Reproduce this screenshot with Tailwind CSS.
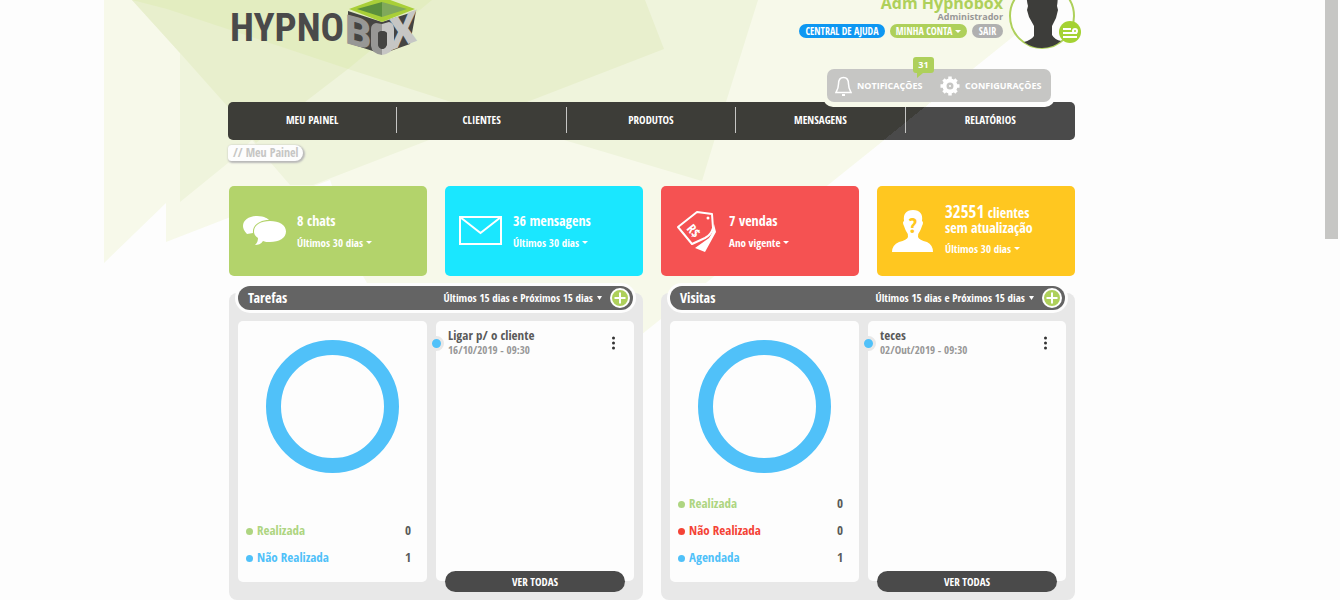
<!DOCTYPE html>
<html lang="pt-BR">
<head>
<meta charset="utf-8">
<title>Hypnobox - Meu Painel</title>
<script src="https://cdn.jsdelivr.net/npm/@tailwindcss/browser@4"></script>
</head>
<body class="relative h-screen overflow-hidden bg-[#fdfdfd] pr-[37px] font-['Open_Sans_Condensed','Open_Sans',sans-serif] text-[11px] font-bold leading-4 text-[#4a4a4a]">
<div class="absolute right-[2px] top-0 h-[239px] w-[13px] bg-[#c6c6c4]"></div>

<div class="relative mx-auto w-full max-w-[847px]">
  <!-- faceted background -->
  <svg class="pointer-events-none absolute -left-[228px] top-0" width="1100" height="600" viewBox="0 0 1100 600" aria-hidden="true">
    <path fill="#f7f9ea" d="M104 0H1059L500 448L367 283L363 276L330 180L228 218L166 242V203L104 263Z"/>
    <path fill="#eff4dc" d="M132 0H758L726 102L702 181L564 140L497 113L429 140L313 185H290L271 163L252 140L228 163L180 202V53Z"/>
    <path fill="#e8efcd" d="M132 0H645L664 49L527 102L500 113L470 108L348 69L305 102L256 143L228 107L180 53Z"/>
    <path fill="#e3edc0" d="M132 0H432L348 69L167 9Z"/>
  </svg>

  <div class="relative">
    <header class="flex h-[102px] justify-between">
      <a href="#" aria-label="Hypnobox" class="block">
        <svg width="200" height="60" viewBox="228 0 200 60">
          <text x="230" y="41" font-family="Roboto Condensed" font-weight="700" font-size="39" fill="#4a4a4a">HYPNO</text>
          <path fill="#444442" d="M348 11L382 22L416 11L410 44L382 54L348 43Z"/>
          <g font-family="Roboto" font-weight="900">
            <text transform="translate(345 43) skewY(15)" font-size="41" fill="#979795">B</text>
            <text transform="translate(389 51) skewY(-20)" font-size="44" fill="#c6c6c4">X</text>
          </g>
          <path fill="#979795" d="M382 24L376 23Q371 24 371 29V46Q372 54 382 55V49Q378 48 378 43V34Q378 31 382 31Z"/>
          <path fill="#c6c6c4" d="M382 24L389 22Q394 23 394 29V45Q393 53 382 55V49Q387 48 387 43V34Q387 31 382 31Z"/>
          <path fill="#444442" d="M378 33Q382 29 387 33V44Q386 49 382 49Q378 48 378 44Z"/>
          <path fill="#a9cf38" d="M382 -3L415 9L382 22L349 9Z"/>
          <path fill="#5b8f3c" d="M382 2V17L357 9Z"/>
          <path fill="#80a95b" d="M382 2V17L407 9Z"/>
        </svg>
      </a>
      <div class="-mr-2 flex w-[284px] flex-col justify-between">
        <div class="flex gap-[6px]">
          <div class="-mt-[5px] flex w-[204px] flex-col items-end">
            <p class="font-['Open_Sans'] text-[16px] leading-4 text-[#aed05b]">Adm Hypnobox</p>
            <p class="font-['Open_Sans'] text-[9px] leading-3 text-[#979797]">Administrador</p>
            <div class="mt-px flex w-full gap-[5px] text-[10px] leading-[14px] text-white">
              <a href="#" class="grow whitespace-nowrap rounded-full bg-[#0e97f2] text-center">CENTRAL DE AJUDA</a>
              <button class="flex w-[77px] items-center justify-center gap-[3px] rounded-full bg-[#aed05b]">MINHA CONTA
                <svg width="6" height="3" viewBox="0 0 6 3"><path fill="#fff" d="M0 0H6L3 3Z"/></svg></button>
              <a href="#" class="w-[31px] rounded-full bg-[#b0b0b0] text-center">SAIR</a>
            </div>
          </div>
          <svg class="-mt-[18px] h-[70px] w-[74px] shrink-0" viewBox="1009 -18 74 70" role="img" aria-label="Avatar">
            <circle cx="1042" cy="16" r="32" fill="#fdfdfd" stroke="#aed05b" stroke-width="2"/>
            <path fill="#3d3d3a" d="M1029 -15H1055Q1059 -5 1057 6L1058 10L1056 18L1052 26V35Q1055 40 1061 41Q1053 48 1042 48Q1032 48 1024 42Q1031 40 1034 36V26L1029 17L1027 10L1028 6Q1025 -5 1029 -15Z"/>
            <circle cx="1070" cy="32" r="11" fill="#a4d233"/>
            <path stroke="#fff" stroke-width="2" d="M1063 29H1071M1063 33H1077M1063 37H1077"/>
            <circle cx="1075" cy="31" r="2" fill="none" stroke="#fff" stroke-width="2"/>
          </svg>
        </div>
        <div class="relative ml-6 -mb-[5px] w-[232px] rounded-b-[10px] bg-[linear-gradient(141deg,#f7f9ea_calc(50%+6px),#fdfdfd_calc(50%+6px))] px-1 pb-[5px]">
          <div class="flex h-[33px] items-center rounded-[7px] bg-[#c6c6c4] pl-2 font-['Open_Sans'] text-[9px] font-bold text-white">
            <a href="#" class="flex items-center gap-[5px]">
              <svg width="17" height="20" viewBox="0 0 17 20" fill="none" stroke="#fff" stroke-width="1.5"><path d="M8.500 1.500C4.500 1.500 3.500 5 3.500 8C3.500 12 2.500 14 1 16.500H16C14.500 14 13.500 12 13.500 8C13.500 5 12.500 1.500 8.500 1.500Z"/><path d="M7 19H10" stroke-width="2"/></svg>
              <span class="w-[65px]">NOTIFICAÇÕES</span></a>
            <a href="#" class="ml-[18px] flex items-center gap-[5px]">
              <svg width="20" height="20" viewBox="-10 -10 20 20" fill="none" stroke="#fff"><circle r="5.500" stroke-width="4"/><circle r="1" stroke="none" fill="#fff"/><path stroke-width="3.500" d="M0 -9.500V-6M0 9.500V6M-9.500 0H-6M9.500 0H6M-6.500 -6.500L-4 -4M6.500 6.500L4 4M-6.500 6.500L-4 4M6.500 -6.500L4 -4"/></svg>
              CONFIGURAÇÕES</a>
          </div>
          <span class="absolute -top-3 left-[90px] w-[21px] rounded-[3px] bg-[#aed05b] text-center font-['Open_Sans'] text-[9px] leading-4 text-white">31
            <svg class="absolute left-1 top-4" width="6" height="5" viewBox="0 0 6 5"><path fill="#aed05b" d="M0 0H6L0 5Z"/></svg></span>
        </div>
      </div>
    </header>

    <nav class="-z-10 grid h-[38px] grid-cols-5 items-center divide-x divide-[#c6c6c4] rounded-[5px] bg-[linear-gradient(141deg,#3d3d38_calc(50%+161px),#4a4a4a_calc(50%+161px))] pb-[2px] text-center leading-[26px] text-white">
      <a href="#">MEU PAINEL</a><a href="#">CLIENTES</a><a href="#">PRODUTOS</a><a href="#">MENSAGENS</a><a href="#">RELATÓRIOS</a>
    </nav>

    <div class="mt-[5px] inline-block rounded-l-[4px] rounded-r-[9px] bg-[#fdfdfd] px-[5px] text-[12px] leading-4 text-[#c6c6c4] shadow-[1px_1px_2px_1px_#b8b8b8]">// Meu Painel</div>

    <main class="mt-[25px] pl-px">
      <section class="grid grid-cols-4 gap-[18px] text-white">
        <article class="flex h-[90px] items-center gap-[11px] rounded-[5px] bg-[#b3d36b] pl-[14px]">
          <svg width="43" height="30" viewBox="0 0 43 30" fill="#fff"><path d="M14 0C22 0 25 3 26 4C17 4 9 9 10 17L4 18C1 15 0 12 0 10C0 4 6 0 14 0Z"/><path d="M27 5C36 5 43 9 43 15.500C43 22 36 26 27 26C24 26 22 26 20 25C18 28 15 29 12 29C14 27 15 25 15 22C12 20 11 18 11 15.500C11 9 18 5 27 5Z"/></svg>
          <div class="mt-px"><h2 class="text-[14px] leading-5">8 chats</h2>
          <button class="mt-[2px] flex items-center gap-[3px] leading-5">Últimos 30 dias <svg width="6" height="3" viewBox="0 0 6 3"><path fill="#fff" d="M0 0H6L3 3Z"/></svg></button></div>
        </article>
        <article class="flex h-[90px] items-center gap-[11px] rounded-[5px] bg-[#1ae7ff] pl-[14px]">
          <svg width="43" height="30" viewBox="0 0 43 30" fill="none" stroke="#fff" stroke-width="2"><path d="M1 1H42V28H1ZM1 1L21.500 17L42 1"/></svg>
          <div class="mt-px"><h2 class="text-[14px] leading-5">36 mensagens</h2>
          <button class="mt-[2px] flex items-center gap-[3px] leading-5">Últimos 30 dias <svg width="6" height="3" viewBox="0 0 6 3"><path fill="#fff" d="M0 0H6L3 3Z"/></svg></button></div>
        </article>
        <article class="flex h-[90px] items-center gap-[11px] rounded-[5px] bg-[#f55252] pl-[14px]">
          <svg width="43" height="42" viewBox="0 0 43 42" fill="none"><path stroke="#fff" stroke-width="2" stroke-linejoin="round" d="M3 17L22 2L37 4L38 18Q36 25 30 28L17 34Z"/><circle cx="33" cy="8" r="1.500" fill="#fff"/><path fill="#fff" d="M39 14L41 22L30 42L20 38L34 28Q38 23 39 14Z"/><text x="11" y="19" transform="rotate(50 11 19)" fill="#fff" font-size="13">R$</text></svg>
          <div class="mt-px"><h2 class="text-[14px] leading-5">7 vendas</h2>
          <button class="mt-[2px] flex items-center gap-[3px] leading-5">Ano vigente <svg width="6" height="3" viewBox="0 0 6 3"><path fill="#fff" d="M0 0H6L3 3Z"/></svg></button></div>
        </article>
        <article class="flex h-[90px] items-center gap-[11px] rounded-[5px] bg-[#ffc720] pl-[14px]">
          <svg width="43" height="42" viewBox="0 0 43 42"><path fill="#fff" d="M22 0C29 0 32 4 31 11Q33 12 31 16Q30 19 29 21Q27 23 27 27Q28 30 36 32Q42 35 42 42H1Q1 35 8 32Q16 30 17 27Q17 23 15 21Q14 19 13 16Q11 12 13 11C12 4 15 0 22 0Z"/><text x="22" y="23" text-anchor="middle" fill="#ffc720" font-size="22">?</text></svg>
          <div><h2 class="text-[14px] leading-[15px]"><span class="text-[17px]">32551</span> clientes<br>sem atualização</h2>
          <button class="mt-1 flex items-center gap-[3px] leading-5">Últimos 30 dias <svg width="6" height="3" viewBox="0 0 6 3"><path fill="#fff" d="M0 0H6L3 3Z"/></svg></button></div>
        </article>
      </section>

      <div class="mt-[17px] grid grid-cols-2 gap-[18px]">
        <section class="rounded-[8px] bg-[#e8e8e8] px-[9px] pb-[18px]">
          <header class="-ml-[3px] -mr-[2px] -mt-[10px] rounded-full bg-[#fdfdfd] p-[3px]">
            <div class="flex h-6 items-center rounded-full bg-[#646464] pl-[10px] pr-[3px] text-white">
              <h2 class="grow text-[14px]">Tarefas</h2>
              <button class="flex items-center gap-1">Últimos 15 dias e Próximos 15 dias <svg width="5" height="4" viewBox="0 0 5 4"><path fill="#fff" d="M0 0H5L2.500 4Z"/></svg></button>
              <button class="ml-2" aria-label="Adicionar tarefa"><svg width="20" height="20" viewBox="0 0 20 20"><circle cx="10" cy="10" r="9" fill="#aed05b" stroke="#fff" stroke-width="2"/><path stroke="#fff" stroke-width="2" d="M10 4.500V15.500M4.500 10H15.500"/></svg></button>
            </div>
          </header>
          <div class="mt-2 grid grid-cols-[189fr_198fr] gap-[9px]">
            <div class="flex h-[261px] flex-col rounded-[5px] bg-[#fdfdfd] px-2 pb-[11px] pt-[19px]">
              <svg class="mx-auto" width="134" height="134" viewBox="0 0 134 134" role="img" aria-label="Tarefas"><circle cx="66.500" cy="66.500" r="59" fill="none" stroke="#50c1f9" stroke-width="15"/></svg>
              <ul class="mt-auto text-[13px] leading-[27px]">
                <li class="flex items-center gap-1 text-[#aed581]"><i class="mt-[2px] size-[7px] rounded-full bg-current"></i><span class="grow">Realizada</span><b class="mr-2 text-[#5a5a5a]">0</b></li>
                <li class="flex items-center gap-1 text-[#50c1f9]"><i class="mt-[2px] size-[7px] rounded-full bg-current"></i><span class="grow">Não Realizada</span><b class="mr-2 text-[#5a5a5a]">1</b></li>
              </ul>
            </div>
            <div class="relative mb-px flex flex-col rounded-[5px] bg-[#fdfdfd] pl-3 pr-[9px] pt-[6px]">
              <span class="absolute -left-[7px] top-[15px] size-[15px] rounded-full border-3 border-[#e8e8e8] bg-[#50c1f9]"></span>
              <div class="flex items-center justify-between pr-[9px]">
                <div><h3 class="text-[13px] leading-4 text-[#5a5a5a]">Ligar p/ o cliente</h3><p class="leading-[14px] text-[#979797]">16/10/2019 - 09:30</p></div>
                <button class="mt-[2px]" aria-label="Opções"><svg width="5" height="14" viewBox="0 0 5 14" fill="#333"><circle cx="2.500" cy="2" r="1.500"/><circle cx="2.500" cy="7" r="1.500"/><circle cx="2.500" cy="12" r="1.500"/></svg></button>
              </div>
              <button class="-mb-[11px] -ml-[3px] mt-auto h-[21px] rounded-full bg-[#4a4a4a] text-white">VER TODAS</button>
            </div>
          </div>
        </section>

        <section class="rounded-[8px] bg-[#e8e8e8] px-[9px] pb-[18px]">
          <header class="-ml-[3px] -mr-[2px] -mt-[10px] rounded-full bg-[#fdfdfd] p-[3px]">
            <div class="flex h-6 items-center rounded-full bg-[#646464] pl-[10px] pr-[3px] text-white">
              <h2 class="grow text-[14px]">Visitas</h2>
              <button class="flex items-center gap-1">Últimos 15 dias e Próximos 15 dias <svg width="5" height="4" viewBox="0 0 5 4"><path fill="#fff" d="M0 0H5L2.500 4Z"/></svg></button>
              <button class="ml-2" aria-label="Adicionar visita"><svg width="20" height="20" viewBox="0 0 20 20"><circle cx="10" cy="10" r="9" fill="#aed05b" stroke="#fff" stroke-width="2"/><path stroke="#fff" stroke-width="2" d="M10 4.500V15.500M4.500 10H15.500"/></svg></button>
            </div>
          </header>
          <div class="mt-2 grid grid-cols-[189fr_198fr] gap-[9px]">
            <div class="flex h-[261px] flex-col rounded-[5px] bg-[#fdfdfd] px-2 pb-[11px] pt-[19px]">
              <svg class="mx-auto" width="134" height="134" viewBox="0 0 134 134" role="img" aria-label="Visitas"><circle cx="66.500" cy="66.500" r="59" fill="none" stroke="#50c1f9" stroke-width="15"/></svg>
              <ul class="mt-auto text-[13px] leading-[27px]">
                <li class="flex items-center gap-1 text-[#aed581]"><i class="mt-[2px] size-[7px] rounded-full bg-current"></i><span class="grow">Realizada</span><b class="mr-2 text-[#5a5a5a]">0</b></li>
                <li class="flex items-center gap-1 text-[#f44336]"><i class="mt-[2px] size-[7px] rounded-full bg-current"></i><span class="grow">Não Realizada</span><b class="mr-2 text-[#5a5a5a]">0</b></li>
                <li class="flex items-center gap-1 text-[#50c1f9]"><i class="mt-[2px] size-[7px] rounded-full bg-current"></i><span class="grow">Agendada</span><b class="mr-2 text-[#5a5a5a]">1</b></li>
              </ul>
            </div>
            <div class="relative mb-px flex flex-col rounded-[5px] bg-[#fdfdfd] pl-3 pr-[9px] pt-[6px]">
              <span class="absolute -left-[7px] top-[15px] size-[15px] rounded-full border-3 border-[#e8e8e8] bg-[#50c1f9]"></span>
              <div class="flex items-center justify-between pr-[9px]">
                <div><h3 class="text-[13px] leading-4 text-[#5a5a5a]">teces</h3><p class="leading-[14px] text-[#979797]">02/Out/2019 - 09:30</p></div>
                <button class="mt-[2px]" aria-label="Opções"><svg width="5" height="14" viewBox="0 0 5 14" fill="#333"><circle cx="2.500" cy="2" r="1.500"/><circle cx="2.500" cy="7" r="1.500"/><circle cx="2.500" cy="12" r="1.500"/></svg></button>
              </div>
              <button class="-mb-[11px] -ml-[3px] mt-auto h-[21px] rounded-full bg-[#4a4a4a] text-white">VER TODAS</button>
            </div>
          </div>
        </section>
      </div>
    </main>
  </div>
</div>
</body>
</html>
